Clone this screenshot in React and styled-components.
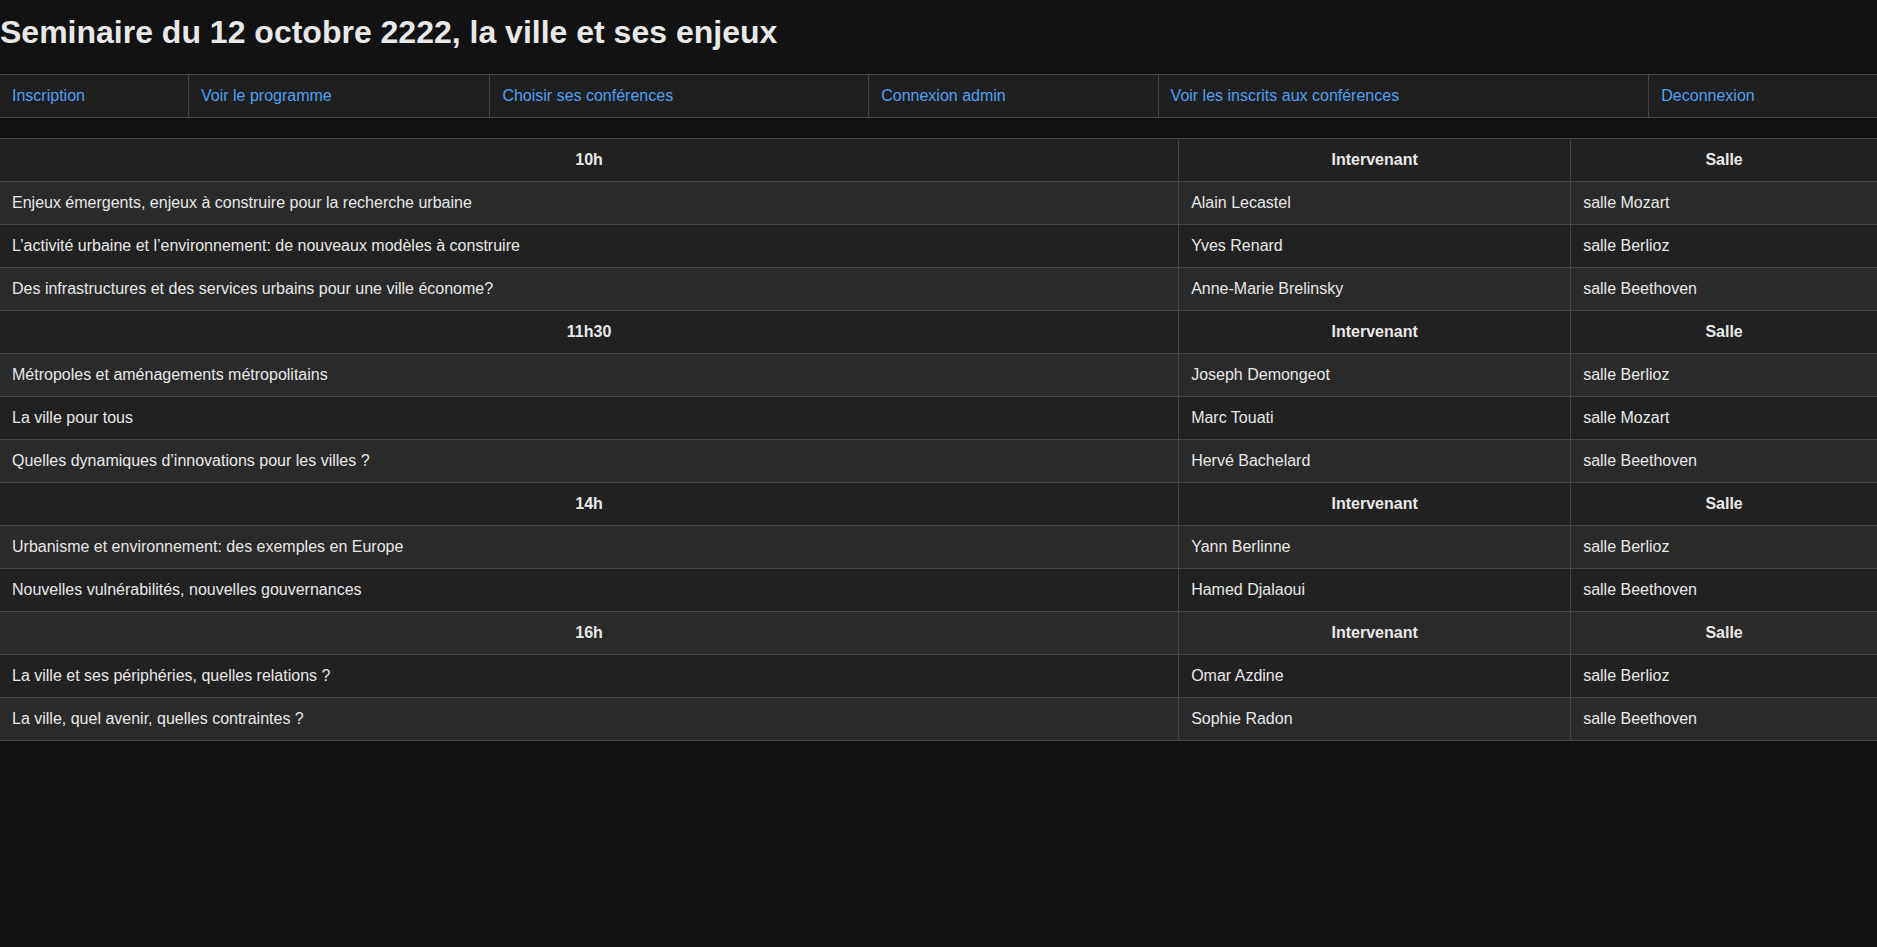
import React from "react";
import styled, { createGlobalStyle } from "styled-components";

const Global = createGlobalStyle`
  html, body {
    margin: 0;
    padding: 0;
    background: #121212;
    color: #e0e0e0;
    font-family: "Liberation Sans", Arial, sans-serif;
    font-size: 16px;
  }
`;

const Title = styled.h1`
  margin: 14px 0 23px;
  font-size: 32px;
  font-weight: bold;
  color: #e8e8e8;
  line-height: normal;
`;

const Nav = styled.nav`
  display: table;
  width: 100%;
  border-collapse: collapse;
  background: #1f1f1f;
  border-top: 1px solid #444;
  border-bottom: 1px solid #444;
`;

const NavItem = styled.a`
  display: table-cell;
  padding: 12px;
  color: #4ea1f5;
  text-decoration: none;
  border-left: ${(p) => (p.$first ? "none" : "1px solid #444")};
  white-space: nowrap;
`;

const Table = styled.table`
  width: 100%;
  border-collapse: collapse;
  margin-top: 20px;
  border-top: 1px solid #444;
  border-bottom: 1px solid #444;

  tr:nth-child(odd) {
    background: #212121;
  }
  tr:nth-child(even) {
    background: #2a2a2a;
  }
`;

const Th = styled.th`
  padding: 12px;
  font-weight: bold;
  text-align: center;
  color: #e8e8e8;
  border-bottom: 1px solid #444;
  border-left: ${(p) => (p.$first ? "none" : "1px solid #444")};
`;

const Td = styled.td`
  padding: 12px;
  text-align: left;
  color: #e8e8e8;
  border-bottom: 1px solid #444;
  border-left: ${(p) => (p.$first ? "none" : "1px solid #444")};
`;

const links = [
  "Inscription",
  "Voir le programme",
  "Choisir ses conférences",
  "Connexion admin",
  "Voir les inscrits aux conférences",
  "Deconnexion",
];

const sessions = [
  {
    time: "10h",
    talks: [
      ["Enjeux émergents, enjeux à construire pour la recherche urbaine", "Alain Lecastel", "salle Mozart"],
      ["L’activité urbaine et l’environnement: de nouveaux modèles à construire", "Yves Renard", "salle Berlioz"],
      ["Des infrastructures et des services urbains pour une ville économe?", "Anne-Marie Brelinsky", "salle Beethoven"],
    ],
  },
  {
    time: "11h30",
    talks: [
      ["Métropoles et aménagements métropolitains", "Joseph Demongeot", "salle Berlioz"],
      ["La ville pour tous", "Marc Touati", "salle Mozart"],
      ["Quelles dynamiques d’innovations pour les villes ?", "Hervé Bachelard", "salle Beethoven"],
    ],
  },
  {
    time: "14h",
    talks: [
      ["Urbanisme et environnement: des exemples en Europe", "Yann Berlinne", "salle Berlioz"],
      ["Nouvelles vulnérabilités, nouvelles gouvernances", "Hamed Djalaoui", "salle Beethoven"],
    ],
  },
  {
    time: "16h",
    talks: [
      ["La ville et ses périphéries, quelles relations ?", "Omar Azdine", "salle Berlioz"],
      ["La ville, quel avenir, quelles contraintes ?", "Sophie Radon", "salle Beethoven"],
    ],
  },
];

export default function App() {
  const rows = [];
  sessions.forEach((s) => {
    rows.push(
      <tr key={s.time}>
        <Th $first>{s.time}</Th>
        <Th>Intervenant</Th>
        <Th>Salle</Th>
      </tr>
    );
    s.talks.forEach((t) => {
      rows.push(
        <tr key={t[0]}>
          <Td $first>{t[0]}</Td>
          <Td>{t[1]}</Td>
          <Td>{t[2]}</Td>
        </tr>
      );
    });
  });

  return (
    <>
      <Global />
      <Title>Seminaire du 12 octobre 2222, la ville et ses enjeux</Title>
      <Nav>
        {links.map((l, i) => (
          <NavItem key={l} href="#" $first={i === 0}>
            {l}
          </NavItem>
        ))}
      </Nav>
      <Table>
        <tbody>{rows}</tbody>
      </Table>
    </>
  );
}
